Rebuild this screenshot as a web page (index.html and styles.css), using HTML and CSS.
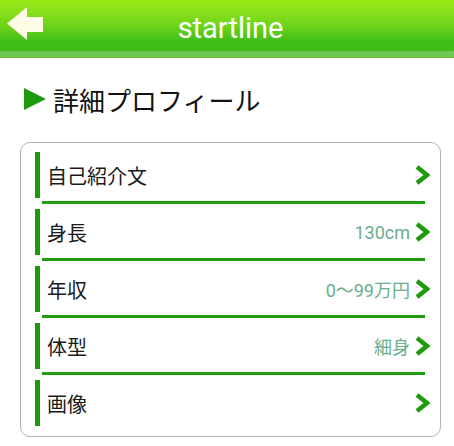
FILE: index.html
```html
<!DOCTYPE html>
<html lang="ja">
<head>
    <meta charset="UTF-8">
    <title>startline</title>
<link rel="stylesheet" href="styles.css">
</head>
<body>
    <div class="header">
        <a class="back">
            <svg width="37" height="34" viewBox="0 0 37 34"><path d="M0 16.5 L20 0 L20 10 L36 10 L36 25 L20 25 L20 33 Z" fill="#fffbe6"/></svg>
        </a>
        <h1>startline</h1>
    </div>
    <h2 class="title">詳細プロフィール</h2>
    <div class="card">
        <div class="row">
            <span class="label">自己紹介文</span>
            <span class="chev"><svg width="16" height="22" viewBox="0 0 16 22"><polyline points="3,3 13,11 3,19" fill="none" stroke="#1e9b0b" stroke-width="4.5"/></svg></span>
        </div>
        <div class="sep"></div>
        <div class="row">
            <span class="label">身長</span>
            <span class="value">130cm</span>
            <span class="chev"><svg width="16" height="22" viewBox="0 0 16 22"><polyline points="3,3 13,11 3,19" fill="none" stroke="#1e9b0b" stroke-width="4.5"/></svg></span>
        </div>
        <div class="sep"></div>
        <div class="row">
            <span class="label">年収</span>
            <span class="value">0〜99万円</span>
            <span class="chev"><svg width="16" height="22" viewBox="0 0 16 22"><polyline points="3,3 13,11 3,19" fill="none" stroke="#1e9b0b" stroke-width="4.5"/></svg></span>
        </div>
        <div class="sep"></div>
        <div class="row">
            <span class="label">体型</span>
            <span class="value">細身</span>
            <span class="chev"><svg width="16" height="22" viewBox="0 0 16 22"><polyline points="3,3 13,11 3,19" fill="none" stroke="#1e9b0b" stroke-width="4.5"/></svg></span>
        </div>
        <div class="sep"></div>
        <div class="row">
            <span class="label">画像</span>
            <span class="chev"><svg width="16" height="22" viewBox="0 0 16 22"><polyline points="3,3 13,11 3,19" fill="none" stroke="#1e9b0b" stroke-width="4.5"/></svg></span>
        </div>
    </div>
</body>
</html>
```

FILE: styles.css
```css
*{
    margin: 0;
    padding: 0;
}
body{
    font-family: Roboto, "Noto Sans CJK JP", sans-serif;
    background: #fff;
    color: #222;
}
.header{
    height: 57px;
    border-bottom: 1px solid #6fbf2e;
    background: linear-gradient(#9aea18 0%, #6fd41a 45%, #3cbc18 75%, #42bc1a 88%, #74c956 92%, #6cc54c 100%);
    display: flex;
    align-items: center;
    position: relative;
}
.back{
    position: absolute;
    left: 7px;
    top: 7px;
    display: block;
}
.header h1{
    flex: 1;
    text-align: center;
    padding-left: 7px;
    color: #fff;
    font-weight: normal;
    font-size: 29px;
    line-height: 57px;
}
.title{
    display: flex;
    align-items: center;
    height: 30px;
    margin: 26px 0 28px;
    padding-left: 24px;
    font-weight: normal;
    font-size: 26px;
    color: #111;
}
.title::before{
    content: "";
    border-left: 22px solid #1c9a0c;
    border-top: 11px solid transparent;
    border-bottom: 11px solid transparent;
    margin-right: 7px;
}
.card{
    margin: 0 13px 0 20px;
    border: 1px solid #b4b4b4;
    border-radius: 10px;
    padding: 9px 10px 10px 14px;
}
.row{
    display: flex;
    align-items: center;
    height: 46px;
    border-left: 5px solid #1c9a0c;
    padding-left: 7px;
}
.label{
    flex: 1;
    font-size: 20px;
    color: #1a1a1a;
}
.value{
    font-size: 18px;
    color: #6aae8c;
    margin-right: 4px;
}
.chev{
    display: flex;
}
.sep{
    height: 3px;
    background: #1f9d0e;
    margin: 3px 5px 5px 7px;
}
```
